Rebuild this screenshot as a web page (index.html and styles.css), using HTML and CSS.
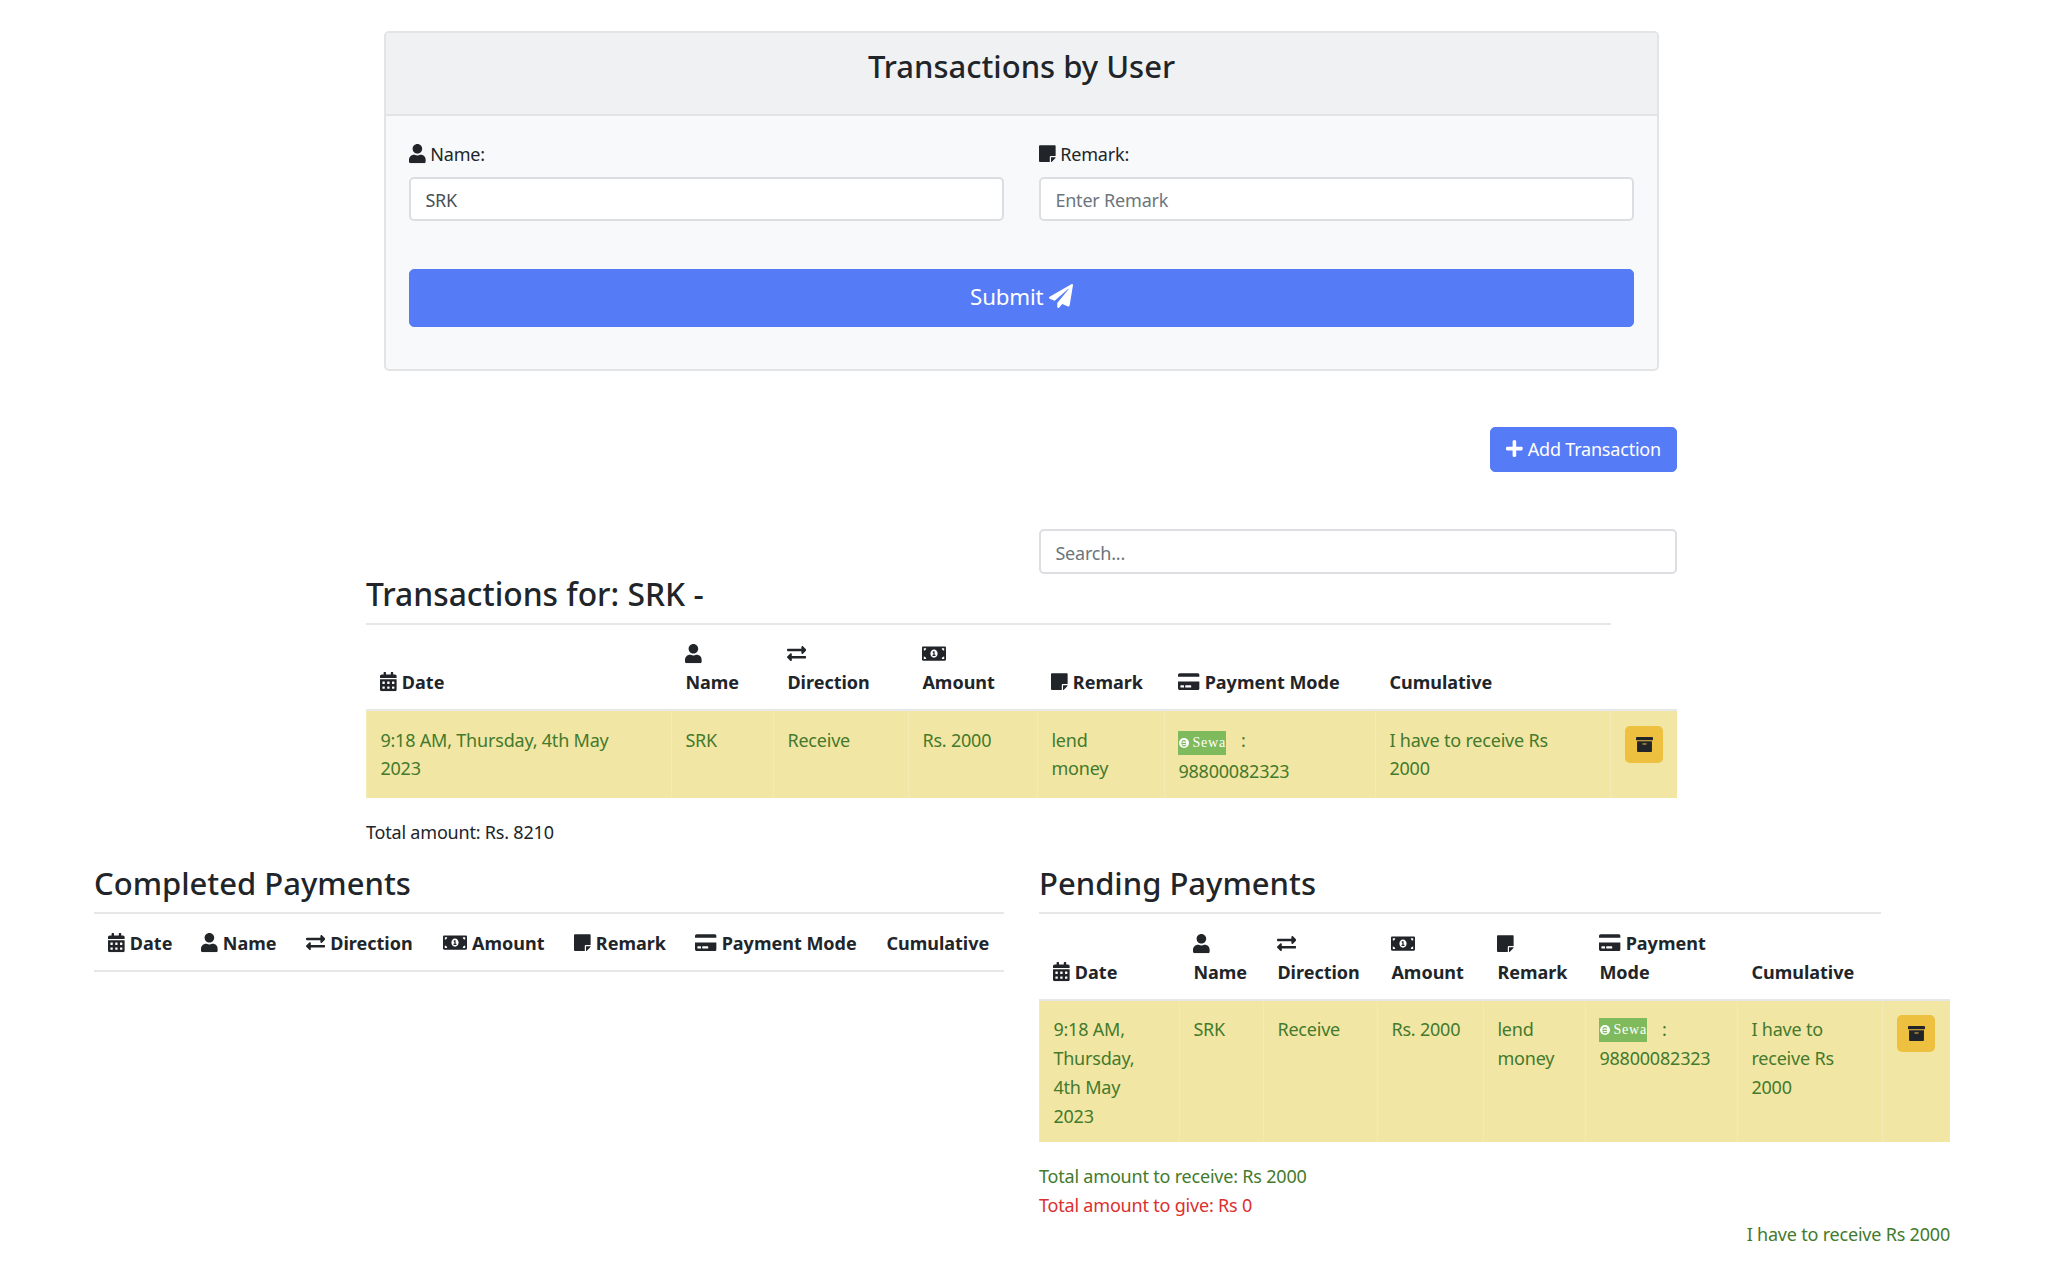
FILE: index.html
```html
<!DOCTYPE html>
<html lang="en">
<head>
<meta charset="utf-8">
<title>Transactions by User</title>
<link rel="stylesheet" href="styles.css">
</head>
<body>
<svg class="sprite" aria-hidden="true">
  <symbol id="i-user" viewBox="0 0 448 512"><path d="M224 256c70.7 0 128-57.3 128-128S294.7 0 224 0 96 57.3 96 128s57.3 128 128 128zm89.6 32h-16.7c-22.2 10.2-46.9 16-72.9 16s-50.6-5.8-72.9-16h-16.7C60.2 288 0 348.2 0 422.4V464c0 26.5 21.5 48 48 48h352c26.5 0 48-21.5 48-48v-41.6c0-74.2-60.2-134.4-134.4-134.4z"/></symbol>
  <symbol id="i-note" viewBox="0 0 448 512"><path d="M312 320h136V56c0-13.3-10.7-24-24-24H24C10.7 32 0 42.7 0 56v400c0 13.3 10.7 24 24 24h264V344c0-13.2 10.8-24 24-24zm129 55l-98 98c-4.5 4.5-10.6 7-17 7h-6V352h128v6.1c0 6.3-2.5 12.4-7 16.9z"/></symbol>
  <symbol id="i-plane" viewBox="0 0 512 512"><path d="M476 3.2L12.5 270.6c-18.1 10.4-15.8 35.6 2.2 43.2L121 358.4l287.3-253.2c5.5-4.9 13.3 2.6 8.6 8.3L176 407v80.5c0 23.6 28.5 32.9 42.5 15.8L282 426l124.6 52.2c14.2 6 30.4-2.9 33-18.2l72-432C515 7.8 493.3-6.8 476 3.2z"/></symbol>
  <symbol id="i-plus" viewBox="0 0 448 512"><path d="M416 208H272V64c0-17.67-14.33-32-32-32h-32c-17.67 0-32 14.33-32 32v144H32c-17.67 0-32 14.33-32 32v32c0 17.67 14.33 32 32 32h144v144c0 17.67 14.33 32 32 32h32c17.67 0 32-14.33 32-32V304h144c17.67 0 32-14.33 32-32v-32c0-17.67-14.33-32-32-32z"/></symbol>
  <symbol id="i-cal" viewBox="0 0 448 512"><path d="M0 464c0 26.5 21.5 48 48 48h352c26.5 0 48-21.5 48-48V192H0v272zm320-196c0-6.6 5.4-12 12-12h40c6.6 0 12 5.4 12 12v40c0 6.6-5.4 12-12 12h-40c-6.6 0-12-5.4-12-12v-40zm0 128c0-6.6 5.4-12 12-12h40c6.6 0 12 5.4 12 12v40c0 6.6-5.4 12-12 12h-40c-6.6 0-12-5.4-12-12v-40zM192 268c0-6.6 5.4-12 12-12h40c6.6 0 12 5.4 12 12v40c0 6.6-5.4 12-12 12h-40c-6.6 0-12-5.4-12-12v-40zm0 128c0-6.6 5.4-12 12-12h40c6.6 0 12 5.4 12 12v40c0 6.6-5.4 12-12 12h-40c-6.6 0-12-5.4-12-12v-40zM64 268c0-6.6 5.4-12 12-12h40c6.6 0 12 5.4 12 12v40c0 6.6-5.4 12-12 12H76c-6.6 0-12-5.4-12-12v-40zm0 128c0-6.6 5.4-12 12-12h40c6.6 0 12 5.4 12 12v40c0 6.6-5.4 12-12 12H76c-6.6 0-12-5.4-12-12v-40zM400 64h-48V16c0-8.8-7.2-16-16-16h-32c-8.8 0-16 7.2-16 16v48H160V16c0-8.8-7.2-16-16-16h-32c-8.8 0-16 7.2-16 16v48H48C21.5 64 0 85.5 0 112v48h448v-48c0-26.5-21.5-48-48-48z"/></symbol>
  <symbol id="i-swap" viewBox="0 0 512 512"><path d="M0 168v-16c0-13.255 10.745-24 24-24h360V80c0-21.367 25.899-32.042 40.971-16.971l80 80c9.372 9.373 9.372 24.569 0 33.941l-80 80C409.956 271.982 384 261.456 384 240v-48H24c-13.255 0-24-10.745-24-24zm488 152H128v-48c0-21.314-25.862-32.08-40.971-16.971l-80 80c-9.372 9.373-9.372 24.569 0 33.941l80 80C102.057 463.997 128 453.437 128 432v-48h360c13.255 0 24-10.745 24-24v-16c0-13.255-10.745-24-24-24z"/></symbol>
  <symbol id="i-bill" viewBox="0 0 640 512"><path d="M352 288h-16v-88c0-4.42-3.58-8-8-8h-13.58c-4.74 0-9.37 1.4-13.31 4.03l-15.33 10.22a7.994 7.994 0 0 0-2.22 11.09l8.88 13.31a7.994 7.994 0 0 0 11.09 2.22l.47-.31V288h-16c-4.42 0-8 3.58-8 8v16c0 4.42 3.58 8 8 8h64c4.42 0 8-3.58 8-8v-16c0-4.42-3.58-8-8-8zM608 64H32C14.33 64 0 78.33 0 96v320c0 17.67 14.33 32 32 32h576c17.67 0 32-14.33 32-32V96c0-17.67-14.33-32-32-32zM48 400v-64c35.35 0 64 28.65 64 64H48zm0-224v-64h64c0 35.35-28.65 64-64 64zm272 192c-53 0-96-50.15-96-112 0-61.86 43-112 96-112s96 50.14 96 112c0 61.83-42.98 112-96 112zm272 32h-64c0-35.35 28.65-64 64-64v64zm0-224c-35.35 0-64-28.65-64-64h64v64z"/></symbol>
  <symbol id="i-card" viewBox="0 0 576 512"><path d="M0 432c0 26.5 21.5 48 48 48h480c26.5 0 48-21.5 48-48V256H0v176zm192-68c0-6.6 5.4-12 12-12h136c6.6 0 12 5.4 12 12v40c0 6.6-5.4 12-12 12H204c-6.6 0-12-5.4-12-12v-40zm-128 0c0-6.6 5.4-12 12-12h72c6.6 0 12 5.4 12 12v40c0 6.6-5.4 12-12 12H76c-6.6 0-12-5.4-12-12v-40zM576 80v48H0V80c0-26.5 21.5-48 48-48h480c26.5 0 48 21.5 48 48z"/></symbol>
  <symbol id="i-box" viewBox="0 0 512 512"><path d="M32 448c0 17.7 14.3 32 32 32h384c17.7 0 32-14.3 32-32V160H32v288zm160-212c0-6.6 5.4-12 12-12h104c6.6 0 12 5.4 12 12v8c0 6.6-5.4 12-12 12H204c-6.6 0-12-5.4-12-12v-8zM480 32H32C14.3 32 0 46.3 0 64v48c0 8.8 7.2 16 16 16h480c8.8 0 16-7.2 16-16V64c0-17.7-14.3-32-32-32z"/></symbol>
</svg>

<main class="page">
  <section class="card">
    <h2 class="card-header">Transactions by User</h2>
    <form class="card-body">
      <div class="fields">
        <div class="field">
          <label class="field-label"><svg class="ic w-user"><use href="#i-user"/></svg> Name:</label>
          <input class="input" type="text" value="SRK">
        </div>
        <div class="field">
          <label class="field-label"><svg class="ic w-user"><use href="#i-note"/></svg> Remark:</label>
          <input class="input" type="text" placeholder="Enter Remark">
        </div>
      </div>
      <button class="btn btn-submit" type="button">Submit <svg class="ic ic-lg"><use href="#i-plane"/></svg></button>
    </form>
  </section>

  <div class="wrap">
    <div class="add-row">
      <button class="btn btn-add" type="button"><svg class="ic w-user"><use href="#i-plus"/></svg> Add Transaction</button>
    </div>
    <div class="search-row">
      <input class="input search" type="text" placeholder="Search...">
    </div>
    <h3 class="section-title main-title">Transactions for: SRK -</h3>
    <table class="table main-table">
      <thead>
        <tr>
          <th class="m1"><svg class="ic w-user"><use href="#i-cal"/></svg> Date</th>
          <th class="m2 stack"><svg class="ic w-user"><use href="#i-user"/></svg> Name</th>
          <th class="m3 stack"><svg class="ic w-square"><use href="#i-swap"/></svg> Direction</th>
          <th class="m4 stack"><svg class="ic w-bill"><use href="#i-bill"/></svg> Amount</th>
          <th class="m5"><svg class="ic w-user"><use href="#i-note"/></svg> Remark</th>
          <th class="m6"><svg class="ic w-card"><use href="#i-card"/></svg> Payment Mode</th>
          <th class="m7">Cumulative</th>
          <th class="m8"></th>
        </tr>
      </thead>
      <tbody>
        <tr>
          <td>9:18 AM, Thursday, 4th May 2023</td>
          <td>SRK</td>
          <td>Receive</td>
          <td>Rs. 2000</td>
          <td>lend money</td>
          <td class="pm-cell"><span class="logo"><svg class="logo-mark" viewBox="0 0 16 16"><circle cx="8" cy="8" r="8" fill="#fff"/><path d="M3.5 8.6h7.6M10.8 5.6A3.6 3.6 0 0 0 4.6 6.6M4.6 10.4a3.8 3.8 0 0 0 6.6 .6" fill="none" stroke="#7fba5c" stroke-width="1.8"/></svg><span class="logo-text">Sewa</span></span> <span class="colon">:</span> 98800082323</td>
          <td>I have to receive Rs 2000</td>
          <td class="action-cell"><button class="btn-archive" type="button" aria-label="Archive"><svg class="ic ic-box"><use href="#i-box"/></svg></button></td>
        </tr>
      </tbody>
    </table>
    <p class="total">Total amount: Rs. 8210</p>
  </div>

  <div class="columns">
    <section class="col">
      <h3 class="section-title">Completed Payments</h3>
      <table class="table left-table">
        <thead>
          <tr>
            <th class="l1"><svg class="ic w-user"><use href="#i-cal"/></svg> Date</th>
            <th class="l2"><svg class="ic w-user"><use href="#i-user"/></svg> Name</th>
            <th class="l3"><svg class="ic w-square"><use href="#i-swap"/></svg> Direction</th>
            <th class="l4"><svg class="ic w-bill"><use href="#i-bill"/></svg> Amount</th>
            <th class="l5"><svg class="ic w-user"><use href="#i-note"/></svg> Remark</th>
            <th class="l6"><svg class="ic w-card"><use href="#i-card"/></svg> Payment Mode</th>
            <th class="l7">Cumulative</th>
          </tr>
        </thead>
      </table>
    </section>
    <section class="col col-right">
      <h3 class="section-title pending-title">Pending Payments</h3>
      <table class="table right-table">
        <thead>
          <tr>
            <th class="r1"><svg class="ic w-user"><use href="#i-cal"/></svg> Date</th>
            <th class="r2 stack"><svg class="ic w-user"><use href="#i-user"/></svg> Name</th>
            <th class="r3 stack"><svg class="ic w-square"><use href="#i-swap"/></svg> Direction</th>
            <th class="r4 stack"><svg class="ic w-bill"><use href="#i-bill"/></svg> Amount</th>
            <th class="r5 stack"><svg class="ic w-user"><use href="#i-note"/></svg> Remark</th>
            <th class="r6"><svg class="ic w-card"><use href="#i-card"/></svg> Payment Mode</th>
            <th class="r7">Cumulative</th>
            <th class="r8"></th>
          </tr>
        </thead>
        <tbody>
          <tr>
            <td>9:18 AM, Thursday, 4th May 2023</td>
            <td>SRK</td>
            <td>Receive</td>
            <td>Rs. 2000</td>
            <td>lend money</td>
            <td class="pm-cell"><span class="logo"><svg class="logo-mark" viewBox="0 0 16 16"><circle cx="8" cy="8" r="8" fill="#fff"/><path d="M3.5 8.6h7.6M10.8 5.6A3.6 3.6 0 0 0 4.6 6.6M4.6 10.4a3.8 3.8 0 0 0 6.6 .6" fill="none" stroke="#7fba5c" stroke-width="1.8"/></svg><span class="logo-text">Sewa</span></span> <span class="colon">:</span> 98800082323</td>
            <td>I have to receive Rs 2000</td>
            <td class="action-cell"><button class="btn-archive" type="button" aria-label="Archive"><svg class="ic ic-box"><use href="#i-box"/></svg></button></td>
          </tr>
        </tbody>
      </table>
      <p class="sum sum-receive">Total amount to receive: Rs 2000</p>
      <p class="sum sum-give">Total amount to give: Rs 0</p>
      <p class="net">I have to receive Rs 2000</p>
    </section>
  </div>
</main>
</body>
</html>
```

FILE: styles.css
```css
* { box-sizing: border-box; }
html, body { margin: 0; padding: 0; background: #fff; }
body {
  font-family: "Noto Sans", "Open Sans", sans-serif;
  font-size: 18px;
  letter-spacing: -0.2px;
  line-height: 28.8px;
  color: #212529;
}
.sprite { display: none; }
.page { width: 2043px; padding-top: 31px; }

.ic { display: inline-block; height: 19.2px; vertical-align: -2.4px; fill: currentColor; overflow: visible; }
.w-user { width: 16.8px; }
.w-square { width: 19.2px; }
.w-bill { width: 24px; }
.w-card { width: 21.6px; }
.ic-lg { width: 24px; height: 24px; vertical-align: -3px; }
.ic-box { width: 17px; height: 17px; display: block; margin: 0 auto; }

.card {
  width: 1275px;
  margin: 0 auto;
  border: 2px solid #e3e4e6;
  border-radius: 5px;
  background: #f8f9fa;
  overflow: hidden;
}
.card-header {
  margin: 0;
  height: 83px;
  padding-top: 13px;
  font-size: 31px;
  line-height: 40px;
  letter-spacing: 0;
  font-weight: 500;
  text-align: center;
  background: #f0f1f3;
  border-bottom: 2px solid #e3e4e6;
}
.card-body { padding: 24px 23px 42px; }
.fields { display: flex; gap: 35px; }
.field { flex: 1; }
.field-label { display: block; margin-bottom: 8px; }
.input {
  display: block;
  width: 100%;
  height: 44px;
  padding: 3px 14.4px 0;
  border: 2px solid #dcdee1;
  border-radius: 5px;
  background: #fff;
  font: inherit;
  letter-spacing: inherit;
  color: #495057;
}
.input::placeholder { color: #6c757d; }

.btn {
  display: inline-block;
  border: 1px solid #567bf6;
  border-radius: 5px;
  background: #567bf6;
  color: #fff;
  font: inherit;
  letter-spacing: inherit;
}
.btn-submit {
  display: block;
  width: 100%;
  height: 58px;
  margin-top: 48px;
  font-size: 22.3px;
}
.btn-add { height: 45px; padding: 0 15px; }

.wrap { width: 1311px; margin: 0 auto; }
.add-row { display: flex; justify-content: flex-end; margin-top: 56px; }
.search-row { display: flex; justify-content: flex-end; margin-top: 57px; }
.search { width: 638px; height: 45px; }

.section-title {
  margin: 0;
  height: 50px;
  font-size: 31px;
  line-height: 38px;
  letter-spacing: 0;
  font-weight: 500;
  border-bottom: 2px solid #e6e7e9;
}
.main-title { width: 1245px; height: 51px; font-size: 31.8px; line-height: 40px; }
.pending-title { width: 842px; }

.table { border-collapse: separate; border-spacing: 0; table-layout: fixed; }
.table th, .table td { padding: 14.4px; text-align: left; }
.table th {
  padding-bottom: 12.5px;
  font-weight: 700;
  letter-spacing: 0;
  vertical-align: bottom;
  border-bottom: 2px solid #e6e7e9;
}
.table th.stack .ic { display: block; margin: 4.8px 0 4.8px; }
.table td {
  padding-left: 13.4px;
  vertical-align: top;
  background: #f2e6a5;
  color: #437a2c;
  border-left: 1px solid #f4eab5;
}
.main-table { width: 1311px; }
.main-table td { padding-right: 20px; }
.left-table { width: 910px; }
.left-table th { white-space: nowrap; }
.right-table { width: 911px; }
.right-table td { padding-bottom: 11.5px; }
.table .pm-cell { padding-bottom: 8px; }
.table .action-cell { padding-left: 14px; padding-right: 0; }

.m1 { width: 305px; } .m2 { width: 102px; } .m3 { width: 135px; } .m4 { width: 129px; }
.m5 { width: 127px; } .m6 { width: 211px; } .m7 { width: 235px; } .m8 { width: 67px; }
.l1 { width: 93px; } .l2 { width: 105px; } .l3 { width: 137px; } .l4 { width: 131px; }
.l5 { width: 121px; } .l6 { width: 191px; } .l7 { width: 132px; }
.r1 { width: 140px; } .r2 { width: 84px; } .r3 { width: 114px; } .r4 { width: 106px; }
.r5 { width: 102px; } .r6 { width: 152px; } .r7 { width: 145px; } .r8 { width: 68px; }

.logo {
  display: inline-flex;
  align-items: center;
  width: 48px;
  height: 24px;
  margin-bottom: 2px;
  padding-left: 1px;
  gap: 3px;
  background: #7fba5c;
  vertical-align: -1px;
  overflow: hidden;
}
.right-table .logo { margin-bottom: 0; vertical-align: 1px; }
.logo-mark { width: 10px; height: 10px; flex: none; }
.logo-text { font-family: "Liberation Serif", serif; font-size: 14px; letter-spacing: 0.8px; line-height: 24px; color: #fff; }
.colon { margin-left: 10px; }

.btn-archive {
  display: block;
  width: 38px;
  height: 37px;
  padding: 0;
  border: 0;
  border-radius: 5px;
  background: #edc13f;
  color: #212529;
}

.total { margin: 20px 0 0; }

.columns { display: flex; gap: 35px; padding-left: 94px; margin-top: 18px; }
.col { width: 910px; }
.col-right { width: 911px; }
.sum { margin: 0; }
.sum-receive { margin-top: 19.5px; color: #437a2c; }
.sum-give { margin-top: 1px; color: #dc2f2f; }
.net { margin: 0; text-align: right; color: #437a2c; }
```
